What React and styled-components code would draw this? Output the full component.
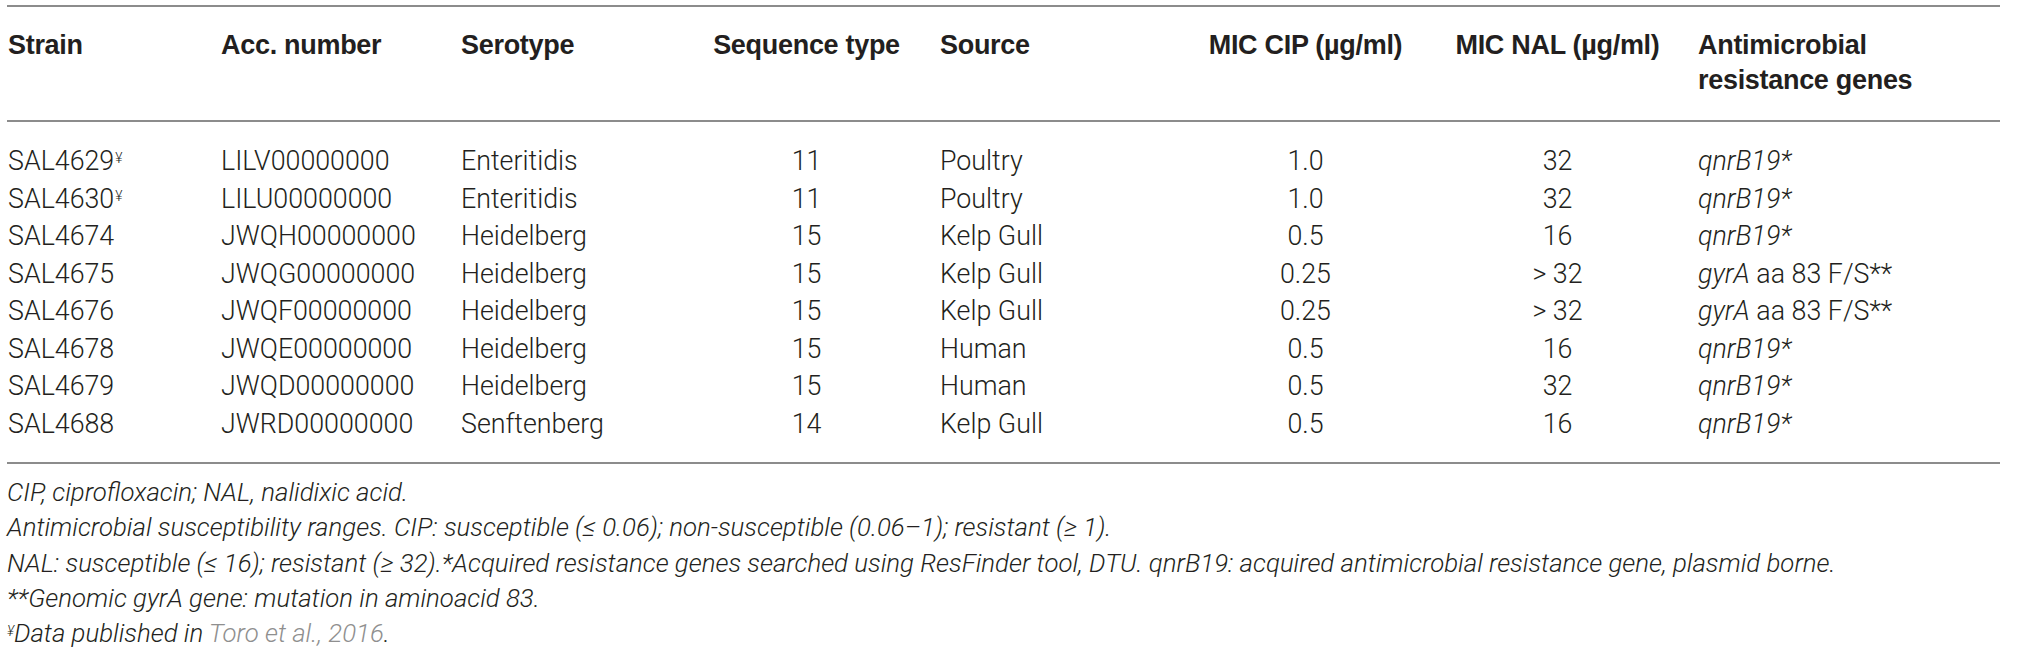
import React from 'react';
import styled, { createGlobalStyle } from 'styled-components';

const GlobalStyle = createGlobalStyle`
    html, body {
        margin: 0;
        padding: 0;
        background: #ffffff;
    }
    body {
        font-family: Roboto, "Liberation Sans", Arial, sans-serif;
        color: #231f20;
    }
`;

const COLS = '213px 240px 213px 266px 254px 224px 280px 303px';

const Page = styled.div`
    width: 1993px;
    padding: 5px 0 0 7px;
`;

const Table = styled.div`
    border-top: 2px solid #8c8c8c;
    border-bottom: 2px solid #8c8c8c;
`;

const Head = styled.div`
    display: grid;
    grid-template-columns: ${COLS};
    padding: 21px 0 22px;
    border-bottom: 2px solid #8c8c8c;
`;

const Th = styled.div`
    font-family: "Liberation Sans", Arial, sans-serif;
    font-weight: 700;
    font-size: 27px;
    line-height: 35px;
    letter-spacing: -0.3px;
    padding-left: 1px;
    color: #231f20;
    text-align: ${p => (p.$center ? 'center' : 'left')};
`;

const Body = styled.div`
    padding: 21px 0 19px;
`;

const Row = styled.div`
    display: grid;
    grid-template-columns: ${COLS};
`;

const Td = styled.div`
    font-weight: 300;
    font-size: 26.8px;
    line-height: 37.5px;
    padding-left: 1px;
    white-space: nowrap;
    text-align: ${p => (p.$center ? 'center' : 'left')};
`;

const Sup = styled.sup`
    font-size: 14px;
    vertical-align: top;
    position: relative;
    top: -3px;
    margin-left: 1px;
`;

const Gene = styled.i`
    font-style: italic;
`;

const Notes = styled.div`
    margin-top: 11px;
`;

const Note = styled.p`
    margin: 0;
    font-weight: 300;
    font-style: italic;
    font-size: 25.8px;
    line-height: 35.3px;
    white-space: nowrap;
`;

const NoteSup = styled.sup`
    font-size: 14px;
    vertical-align: top;
    position: relative;
    top: -2px;
`;

const Ref = styled.span`
    color: #8f8f8f;
`;

const rows = [
    { strain: 'SAL4629', yen: true, acc: 'LILV00000000', sero: 'Enteritidis', st: '11', src: 'Poultry', cip: '1.0', nal: '32', gene: 'q' },
    { strain: 'SAL4630', yen: true, acc: 'LILU00000000', sero: 'Enteritidis', st: '11', src: 'Poultry', cip: '1.0', nal: '32', gene: 'q' },
    { strain: 'SAL4674', acc: 'JWQH00000000', sero: 'Heidelberg', st: '15', src: 'Kelp Gull', cip: '0.5', nal: '16', gene: 'q' },
    { strain: 'SAL4675', acc: 'JWQG00000000', sero: 'Heidelberg', st: '15', src: 'Kelp Gull', cip: '0.25', nal: '> 32', gene: 'g' },
    { strain: 'SAL4676', acc: 'JWQF00000000', sero: 'Heidelberg', st: '15', src: 'Kelp Gull', cip: '0.25', nal: '> 32', gene: 'g' },
    { strain: 'SAL4678', acc: 'JWQE00000000', sero: 'Heidelberg', st: '15', src: 'Human', cip: '0.5', nal: '16', gene: 'q' },
    { strain: 'SAL4679', acc: 'JWQD00000000', sero: 'Heidelberg', st: '15', src: 'Human', cip: '0.5', nal: '32', gene: 'q' },
    { strain: 'SAL4688', acc: 'JWRD00000000', sero: 'Senftenberg', st: '14', src: 'Kelp Gull', cip: '0.5', nal: '16', gene: 'q' },
];

function GeneCell({ kind }) {
    if (kind === 'g') {
        return (
            <>
                <Gene>gyrA</Gene> aa 83 F/S**
            </>
        );
    }
    return <Gene>qnrB19*</Gene>;
}

export default function App() {
    return (
        <Page>
            <GlobalStyle />
            <Table>
                <Head>
                    <Th>Strain</Th>
                    <Th>Acc. number</Th>
                    <Th>Serotype</Th>
                    <Th $center>Sequence type</Th>
                    <Th>Source</Th>
                    <Th $center>MIC CIP (µg/ml)</Th>
                    <Th $center>MIC NAL (µg/ml)</Th>
                    <Th>Antimicrobial<br />resistance genes</Th>
                </Head>
                <Body>
                    {rows.map(r => (
                        <Row key={r.strain}>
                            <Td>
                                {r.strain}
                                {r.yen && <Sup>¥</Sup>}
                            </Td>
                            <Td>{r.acc}</Td>
                            <Td>{r.sero}</Td>
                            <Td $center>{r.st}</Td>
                            <Td>{r.src}</Td>
                            <Td $center>{r.cip}</Td>
                            <Td $center>{r.nal}</Td>
                            <Td><GeneCell kind={r.gene} /></Td>
                        </Row>
                    ))}
                </Body>
            </Table>
            <Notes>
                <Note>CIP, ciprofloxacin; NAL, nalidixic acid.</Note>
                <Note>Antimicrobial susceptibility ranges. CIP: susceptible (≤ 0.06); non-susceptible (0.06–1); resistant (≥ 1).</Note>
                <Note>NAL: susceptible (≤ 16); resistant (≥ 32).*Acquired resistance genes searched using ResFinder tool, DTU. qnrB19: acquired antimicrobial resistance gene, plasmid borne.</Note>
                <Note>**Genomic gyrA gene: mutation in aminoacid 83.</Note>
                <Note><NoteSup>¥</NoteSup>Data published in <Ref>Toro et al., 2016</Ref>.</Note>
            </Notes>
        </Page>
    );
}
